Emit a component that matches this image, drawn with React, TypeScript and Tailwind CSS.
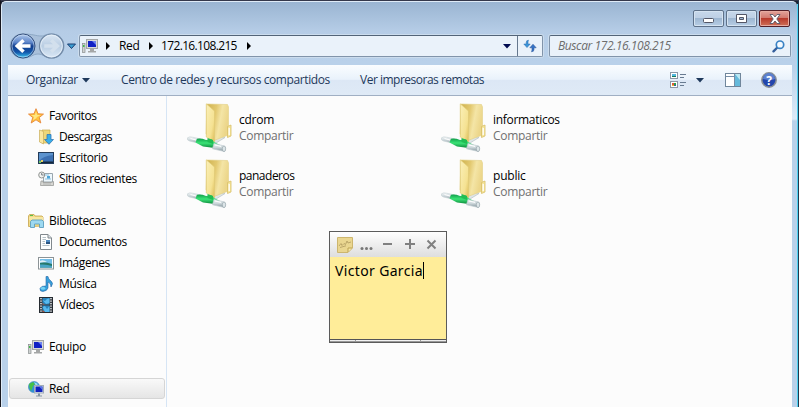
import React from "react";

function Caret({ className = "" }: { className?: string }) {
  return (
    <svg width="8" height="5" viewBox="0 0 8 5" className={className}>
      <path d="M0 0H8L4 4.6Z" fill="currentColor" />
    </svg>
  );
}

function Chevron() {
  return (
    <svg width="4" height="8" viewBox="0 0 4 8" className="shrink-0">
      <path d="M0 0L4 4L0 8Z" fill="#000" />
    </svg>
  );
}

function NavButtons() {
  return (
    <svg width="70" height="28" viewBox="0 0 70 28" className="shrink-0">
      <defs>
        <linearGradient id="back" x1="0" y1="0" x2="0" y2="1">
          <stop offset="0" stopColor="#b3cbed" />
          <stop offset="0.35" stopColor="#5d85c9" />
          <stop offset="0.5" stopColor="#133f8e" />
          <stop offset="0.75" stopColor="#1254a8" />
          <stop offset="1" stopColor="#39c8f5" />
        </linearGradient>
        <linearGradient id="fwd" x1="0" y1="0" x2="0" y2="1">
          <stop offset="0" stopColor="#dbe7f4" />
          <stop offset="0.5" stopColor="#b9cde2" />
          <stop offset="1" stopColor="#dbe9f6" />
        </linearGradient>
      </defs>
      <path d="M15 2C25 2 28 4 33 4C38 4 36 2 44 2C60 2 60 26 44 26C36 26 36 22 30 22C24 22 24 26 15 26C-2 26-2 2 15 2Z" fill="#a9c0da" stroke="#8da8c5" strokeWidth="1" />
      <circle cx="15" cy="14" r="12" fill="url(#back)" stroke="#354f7c" strokeWidth="1" />
      <circle cx="15" cy="14" r="11" fill="none" stroke="#d2e5f8" strokeOpacity=".55" />
      <path d="M15.5 8.2L9.3 14L15.5 19.8M9.8 14H22.5" fill="none" stroke="#fff" strokeWidth="3.6" />
      <circle cx="43.5" cy="14" r="12" fill="url(#fwd)" stroke="#7189a6" strokeWidth="1.2" />
      <circle cx="43.5" cy="14" r="10.8" fill="none" stroke="#e8f1fa" strokeOpacity=".8" />
      <path d="M43.2 8.2L49.4 14L43.2 19.8M49 14H36.2" fill="none" stroke="#d3e0ed" strokeWidth="3.6" />
      <path d="M59.5 12H67.5L63.5 16.5Z" fill="#3b9ed2" stroke="#1b3d70" strokeWidth="1" />
    </svg>
  );
}

function ComputerIcon() {
  return (
    <svg width="16" height="16" viewBox="0 0 16 16" className="shrink-0">
      <rect x="0.5" y="5.5" width="2.5" height="9" fill="#ced2d1" stroke="#888d8e" strokeWidth=".7" />
      <path d="M1 7H2.5V9H1Z" fill="#42ba4a" />
      <rect x="4.5" y="1.5" width="11" height="9" fill="#d7d9d8" stroke="#a3a6a7" />
      <rect x="6" y="3" width="8" height="6" fill="#1020c4" />
      <path d="M10 3H14V7Z" fill="#6e83ef" />
      <path d="M8 11H12V13H14V14.5H6V13H8Z" fill="#a5a7a7" />
    </svg>
  );
}

function NetworkIcon() {
  return (
    <svg width="16" height="16" viewBox="0 0 16 16" className="shrink-0">
      <circle cx="6" cy="6" r="5.6" fill="#3093d6" stroke="#4a91bf" strokeWidth=".6" />
      <path d="M1 3L5 1L7 3L5 5L4 8L3 10L1.5 7Z" fill="#46c245" />
      <path d="M6 1L10 3L8 5Z" fill="#9ee0f2" />
      <rect x="6.5" y="4.5" width="9" height="7.5" fill="#dbe3ec" stroke="#a0abb6" />
      <rect x="7.5" y="5.5" width="7" height="5.5" fill="#1122bd" />
      <path d="M11 5.5H14.5V9Z" fill="#5a76e5" />
      <path d="M10 12.5H12V14.5H14V15.5H8V14.5H10Z" fill="#8696a5" />
    </svg>
  );
}

function StarIcon() {
  return (
    <svg width="16" height="16" viewBox="0 0 16 16" className="shrink-0">
      <path d="M8 .7L10 5.8L15.5 6.1L11.3 9.5L12.8 15L8 11.8L3.2 15L4.7 9.5L.5 6.1L6 5.8Z" fill="#ffc33a" stroke="#e7863a" strokeWidth=".9" />
      <path d="M8 3L9 7L13 7L9 9L8 10.5L5 12L6 9L3 7L7 7Z" fill="#ffe783" />
    </svg>
  );
}

function DownloadsIcon() {
  return (
    <svg width="16" height="16" viewBox="0 0 16 16" className="shrink-0">
      <path d="M4 1H12V14H4Z" fill="#eed779" stroke="#c7a94b" strokeWidth=".7" />
      <path d="M1.5 1L5.5 2.5V15L1.5 13Z" fill="#fae7a0" stroke="#c9ad5b" strokeWidth=".7" />
      <path d="M9 5.5H13V10.5H15.5L11 15.3L6.5 10.5H9Z" fill="#38aee9" stroke="#3577b2" strokeWidth=".8" />
    </svg>
  );
}

function DesktopIcon() {
  return (
    <svg width="16" height="16" viewBox="0 0 16 16" className="shrink-0">
      <rect x=".5" y="2.5" width="15" height="11" fill="#3c70b2" stroke="#233c5a" />
      <path d="M1 3H15V5Q5 6 1 11Z" fill="#5c93ce" />
      <path d="M1 11.5H15V13H1Z" fill="#14283d" />
      <path d="M1 11H3V13H1Z" fill="#75cb61" />
      <path d="M3 10H5V12H3Z" fill="#e7cc68" />
    </svg>
  );
}

function RecentIcon() {
  return (
    <svg width="16" height="16" viewBox="0 0 16 16" className="shrink-0">
      <path d="M5.5 2.5H14.5V11H5.5Z" fill="#eef7fc" stroke="#9aa6ae" />
      <path d="M7 4H11M7 8H13" stroke="#8cc2df" />
      <path d="M9 5H12V7.5H9Z" fill="#4da5d8" />
      <path d="M3 10H5V11.5H13L15.5 10.5V14.5H2.5Z" fill="#d8d8d4" stroke="#9b9c99" strokeWidth=".8" />
      <path d="M5 13H13" stroke="#b0b3b2" />
      <circle cx="3.7" cy="4" r="3" fill="#f2f3f1" stroke="#909491" />
      <path d="M3.7 2V4H5.7" fill="none" stroke="#566169" strokeWidth=".8" />
    </svg>
  );
}

function LibraryIcon() {
  return (
    <svg width="16" height="16" viewBox="0 0 16 16" className="shrink-0">
      <path d="M.5 3V13.5H3L15 13V4L14 3H7L6 1.5H1.5Z" fill="#f2dc87" stroke="#c5a34b" strokeWidth=".8" />
      <path d="M1 4H15V7H1Z" fill="#f8e7a1" />
      <path d="M2 2.5H5" stroke="#59be49" />
      <path d="M4 7H14L15.5 8.5V14.5H11.5V11H6.5V14.5H2.5V8.5Z" fill="#9dd9f1" stroke="#5f9fbf" strokeWidth=".9" />
    </svg>
  );
}

function DocumentIcon() {
  return (
    <svg width="16" height="16" viewBox="0 0 16 16" className="shrink-0">
      <path d="M2.5 .5H10L13.5 4V15.5H2.5Z" fill="#fdfefe" stroke="#81888d" />
      <path d="M10 .5V4H13.5" fill="#dce3e8" stroke="#81888d" />
      <path d="M4.5 3.5H8M4.5 5.5H8M4.5 7.5H7M4.5 9.5H7M4.5 11.5H11.5" stroke="#a2b0b8" strokeWidth=".8" />
      <path d="M8 6H12V10H8Z" fill="#4f8ac1" />
      <path d="M8 8H12V10H8Z" fill="#285584" />
    </svg>
  );
}

function ImageIcon() {
  return (
    <svg width="16" height="16" viewBox="0 0 16 16" className="shrink-0">
      <rect x=".5" y="2.5" width="15" height="11.5" fill="#fff" stroke="#8c9396" />
      <rect x="2" y="4" width="12" height="8.5" fill="#72bde8" />
      <path d="M2 8Q6 6 14 9V12.5H2Z" fill="#27796b" />
      <path d="M2 9.5Q9 9 14 11V12.5H2Z" fill="#48a4c6" />
      <path d="M2 6Q5 4 9 7L2 7.5Z" fill="#e0f0f7" />
    </svg>
  );
}

function MusicIcon() {
  return (
    <svg width="16" height="16" viewBox="0 0 16 16" className="shrink-0">
      <path d="M8 .5H10Q10 3 13 5Q16 7 13 11Q13 7 10 6V12Q9 15 5 15.5Q1.5 15.5 2 12.5Q3 9.5 8 10Z" fill="#35a0dc" stroke="#2865a4" strokeWidth=".6" />
      <ellipse cx="5" cy="12.3" rx="2.2" ry="1.5" fill="#75d2f3" />
    </svg>
  );
}

function VideoIcon() {
  return (
    <svg width="16" height="16" viewBox="0 0 16 16" className="shrink-0">
      <rect x="1.5" y=".5" width="13" height="15" fill="#393d42" stroke="#262b31" />
      <rect x="4.5" y="1" width="7" height="6.5" fill="#2884bd" />
      <rect x="4.5" y="8.5" width="7" height="6.5" fill="#2884bd" />
      <path d="M4.5 3L7 4L9 2L11.5 1V6L8 7Z" fill="#57baf0" />
      <path d="M4.5 10L7 9L9 12L11.5 9V15H7Z" fill="#55b9ef" />
      <path d="M4.5 6L7 7.5H4.5ZM4.5 13L7 15H4.5Z" fill="#b4563b" />
      <path d="M3 1V15M13 1V15" stroke="#edf4f8" strokeWidth="1.4" strokeDasharray="1.3 1.2" />
    </svg>
  );
}

function SharedFolderIcon() {
  return (
    <svg width="48" height="50" viewBox="0 0 48 50" className="shrink-0">
      <defs>
        <linearGradient id="folderback" x1="0" y1="0" x2="1" y2=".3">
          <stop offset="0" stopColor="#cdb04c" />
          <stop offset=".45" stopColor="#e3c970" />
          <stop offset=".7" stopColor="#f4e5a6" />
          <stop offset="1" stopColor="#ecd68a" />
        </linearGradient>
        <linearGradient id="folderfront" x1="0" y1="0" x2="1" y2="1">
          <stop offset="0" stopColor="#fbf0b8" />
          <stop offset=".65" stopColor="#f5e293" />
          <stop offset="1" stopColor="#dcbc57" />
        </linearGradient>
        <linearGradient id="pipe" x1="0" y1="0" x2="0" y2="1">
          <stop offset="0" stopColor="#f2f6f7" />
          <stop offset=".5" stopColor="#cbd5d9" />
          <stop offset="1" stopColor="#81939a" />
        </linearGradient>
        <linearGradient id="cable" x1="0" y1="0" x2="0" y2="1">
          <stop offset="0" stopColor="#11a04b" />
          <stop offset=".45" stopColor="#3be477" />
          <stop offset="1" stopColor="#087d34" />
        </linearGradient>
      </defs>
      <path d="M27 38L35 33.5L39 34.5L30 40Z" fill="#dfe5e8" stroke="#b7c1c5" strokeWidth=".7" />
      <path d="M21 1L41.5 1.5L42.5 4V32L28 37.5L20 31Z" fill="url(#folderback)" stroke="#e3d084" strokeWidth=".6" />
      <path d="M20.3 .8L28.5 8V39L20.3 34Z" fill="url(#folderfront)" stroke="#e0ca77" strokeWidth=".7" />
      <path d="M41.5 23.5L45 22V33L41.5 34.5Z" fill="#f6e69d" stroke="#d8bf67" strokeWidth=".8" />
      <path d="M43.2 25V32" stroke="#fff" strokeWidth="1.3" />
      <path d="M1.5 34.8Q3.5 33.3 6.5 34.2L15 36L14 40.5L3.5 38Q.5 37 1.5 34.8Z" fill="url(#pipe)" stroke="#cbd5d9" strokeWidth=".7" />
      <path d="M11 35.8Q15 35 20 37L26 36.5L28 39L34 42L32 45.5L23 44.2L17 43.5L9.5 39.5Z" fill="url(#cable)" />
      <path d="M21.5 35L27 37V41L21.5 39Z" fill="#21bd54" />
      <path d="M28 40.5L38.5 43Q40.5 45 38.5 48.5L26.5 45.8Z" fill="url(#pipe)" stroke="#c3ced2" strokeWidth=".7" />
      <ellipse cx="38" cy="45.8" rx="1.7" ry="2.8" fill="#dce5e8" stroke="#94a1a7" strokeWidth=".6" />
      <path d="M4.5 35.5L10 37M29 42L35 43.4" stroke="#fff" strokeWidth="1" />
    </svg>
  );
}

type ShareProps = { name: string; tracking: string };
function Share({ name, tracking }: ShareProps) {
  return (
    <div className="flex h-14 w-[254px] items-start">
      <SharedFolderIcon />
      <div className="ml-[5px] pt-[9px] text-[12px] leading-4 text-black">
        <div><span className={tracking}>{name}</span></div>
        <div><span className="tracking-[-0.3px] text-[#707070]">Compartir</span></div>
      </div>
    </div>
  );
}

type TreeProps = { icon: React.ReactNode; text: string; tracking: string; child?: boolean; selected?: boolean };
function TreeRow({ icon, text, tracking, child, selected }: TreeProps) {
  return (
    <div className={`ml-px flex h-[21px] w-[156px] items-center rounded-[3px] border text-[12px] text-black ${child ? "pl-[28px]" : "pl-[18px]"} ${selected ? "border-[#d5d5d5] bg-linear-to-b from-[#f9f9f9] to-[#e5e5e5]" : "border-transparent"}`}>
      {icon}
      <span className={`ml-[5px] whitespace-nowrap ${tracking}`}>{text}</span>
    </div>
  );
}

function WindowButtons() {
  return (
    <div className="flex gap-[2px]">
      <div className="flex h-[17px] w-[31px] items-center justify-center rounded-[2px] border border-[#5e7189] bg-[linear-gradient(#c7d8eb_0%,#bdcfe4_48%,#9eb7d2_50%,#b7cee5_100%)] shadow-[inset_0_0_0_1px_#d5e3f1]">
        <svg width="11" height="5" viewBox="0 0 11 5" className="mt-1"><rect x=".5" y=".5" width="10" height="4" rx="1" fill="#fff" stroke="#535666" /></svg>
      </div>
      <div className="flex h-[17px] w-[31px] items-center justify-center rounded-[2px] border border-[#5e7189] bg-[linear-gradient(#c7d8eb_0%,#bdcfe4_48%,#9eb7d2_50%,#b7cee5_100%)] shadow-[inset_0_0_0_1px_#d5e3f1]">
        <svg width="11" height="9" viewBox="0 0 11 9"><path fillRule="evenodd" d="M.5.5H10.5V8.5H.5ZM3.5 3.5V5.5H7.5V3.5Z" fill="#fff" stroke="#535666" /></svg>
      </div>
      <div className="flex h-[17px] w-[31px] items-center justify-center rounded-[2px] border border-[#521e27] bg-[linear-gradient(#e2a39b_0%,#d2796e_46%,#b83a2c_50%,#cf7058_100%)] shadow-[inset_0_0_0_1px_#e6aaa0]">
        <svg width="12" height="10" viewBox="0 0 12 10"><path d="M1 .5H4L6 3L8 .5H11L7.8 5L11 9.5H8L6 7L4 9.5H1L4.2 5Z" fill="#fff" stroke="#58596a" strokeWidth=".9" /></svg>
      </div>
    </div>
  );
}

function StickyNote() {
  return (
    <div className="absolute left-[328px] top-[230px] flex h-[112px] w-[118px] flex-col border border-[#5b5b5b] bg-[#ffed99]">
      <div className="flex h-[25px] shrink-0 items-center bg-linear-to-b from-[#fefefe] to-[#dedede] text-[#808080]">
        <svg width="16" height="16" viewBox="0 0 16 16" className="ml-[7px] shrink-0">
          <path d="M.5.5H15.5V11L11 15.5H.5Z" fill="#ead690" stroke="#cdb66e" />
          <path d="M11 15V11H15" fill="#f7e7a6" stroke="#bca252" />
          <path d="M2 9L4 6.5L5 8.5L7 6.5L8.5 7.5L10 4L11 6L14 5M3 10.5L9 8.8" fill="none" stroke="#b09b60" strokeWidth=".8" />
        </svg>
        <svg width="92" height="24" viewBox="0 0 92 24" className="shrink-0">
          <g fill="#777"><circle cx="9" cy="15.5" r="1.5" /><circle cx="13.5" cy="15.5" r="1.5" /><circle cx="18" cy="15.5" r="1.5" /></g>
          <path d="M30 11H39M52 11H62M57 6V16" stroke="#808080" strokeWidth="2" />
          <path d="M74.5 7.5L82.5 15.5M82.5 7.5L74.5 15.5" stroke="#808080" strokeWidth="2" />
        </svg>
      </div>
      <div className="flex flex-1 items-start pl-[5px] pt-[5px]">
        <span className="whitespace-nowrap font-['Noto_Sans','Open_Sans',sans-serif] text-[14px] leading-[18px] tracking-[0.35px] text-black">Victor Garcia</span>
        <i className="h-[17px] w-px bg-black" />
      </div>
      <div className="flex h-[3px] gap-px border-t border-[#555] bg-[#999]">
        <i className="h-px w-[25px] bg-[#eee]" /><i className="h-px flex-1 bg-[#f3f3f3]" /><i className="h-px w-[25px] bg-[#eee]" />
      </div>
    </div>
  );
}

export default function App() {
  return (
    <div className="relative flex h-[407px] w-[799px] overflow-hidden border-l border-t border-l-[#17171f] border-t-[#34384b] bg-[#1b2335] font-['Open_Sans','Noto_Sans',sans-serif] text-[12px]">
      <div className="flex w-[796px] shrink-0 flex-col rounded-tl-[5px] rounded-tr-[5px] border-l border-t border-[#dfebf7] bg-[linear-gradient(#9ab5d2_0px,#b5cce6_29px,#b9d1ea_60px)] pl-[6px]">
        <div className="flex h-[26px] shrink-0 justify-end pr-[7px] pt-[8px]"><WindowButtons /></div>
        <div className="flex h-[37px] shrink-0 items-start pt-[4px]">
          <NavButtons />
          <div className="ml-px mt-[3px] flex h-[22px] w-[464px] items-center rounded-[2px] border border-[#8194aa] border-t-[#526478] bg-[#eaf2fa] pl-[2px] shadow-[0_0_0_1px_#cbdced]">
            <ComputerIcon />
            <span className="ml-[8px] flex"><Chevron /></span>
            <span className="ml-[9px] w-[30px] tracking-[-0.3px]">Red</span>
            <Chevron />
            <span className="ml-[8px] w-[84px] tracking-[-0.65px]">172.16.108.215</span>
            <span className="ml-[2px] flex"><Chevron /></span>
            <Caret className="ml-auto mr-[6px] text-[#000b50]" />
            <span className="flex h-full w-[25px] items-center justify-center border-l border-[#65788e]">
              <svg width="16" height="14" viewBox="0 0 16 14">
                <path d="M6.5 1.2Q4.2 1.2 4.2 3.5V5H1.8L5 8.6L8.2 5H6Q5.8 2.5 6.5 1.2Z" fill="#3a94d7" stroke="#2869ae" strokeWidth=".5" />
                <path d="M9.5 12.8Q12 12.8 12 10.5V8.8H14.2L11 5.2L7.8 8.8H10Q10.2 11.5 9.5 12.8Z" fill="#3673c5" stroke="#285296" strokeWidth=".5" />
              </svg>
            </span>
          </div>
          <div className="ml-[6px] mt-[3px] flex h-[22px] w-[242px] items-center rounded-[2px] border border-[#8194aa] border-t-[#526478] bg-[#eaf2fa] pl-[8px] pr-[5px] italic text-[#6d6d6d] shadow-[0_0_0_1px_#cbdced]">
            <span className="whitespace-nowrap tracking-[-0.4px]">Buscar 172.16.108.215</span>
            <svg width="13" height="13" viewBox="0 0 13 13" className="ml-auto">
              <path d="M5.3 7.5L1.5 11.3" stroke="#355f9c" strokeWidth="2.4" strokeLinecap="round" />
              <circle cx="8" cy="4.7" r="3.7" fill="#f4faff" stroke="#3982c4" strokeWidth="1.7" />
            </svg>
          </div>
        </div>
        <div className="flex min-h-0 flex-1">
          <div className="flex w-[784px] shrink-0 flex-col bg-[#fcfcfc]">
            <div className="flex h-[31px] shrink-0 items-center border-b border-[#a0afc3] bg-[linear-gradient(#fafdff_0%,#e9f2fb_48%,#dce7f5_50%,#dfeaf6_100%)] pl-[18px] text-[#1e395b]">
              <span className="w-[56px] whitespace-nowrap tracking-[-0.35px]">Organizar</span>
              <Caret />
              <span className="ml-[31px] w-[239px] whitespace-nowrap tracking-[-0.4px]">Centro de redes y recursos compartidos</span>
              <span className="whitespace-nowrap tracking-[-0.5px]">Ver impresoras remotas</span>
              <div className="ml-auto flex items-center pr-[15px]">
                <svg width="17" height="16" viewBox="0 0 17 16">
                  <g stroke="#8b97a5" fill="#fff"><rect x=".5" y=".5" width="7" height="6" /><rect x=".5" y="9.5" width="7" height="6" /></g>
                  <path d="M2 2H6V4H2Z" fill="#52b7df" /><path d="M2 4H6V5H2Z" fill="#177a57" />
                  <path d="M2 11H4V13H2Z" fill="#dd563f" /><path d="M4 11H6V13H4Z" fill="#2aa24a" /><path d="M2 13H4V14H2Z" fill="#e8b52c" /><path d="M4 13H6V14H4Z" fill="#315bb0" />
                  <path d="M10 2.5H16M10 5.5H14M10 10.5H16M10 13.5H14" stroke="#687b91" />
                </svg>
                <Caret className="ml-[9px]" />
                <svg width="16" height="14" viewBox="0 0 16 14" className="ml-[21px]">
                  <rect x=".5" y=".5" width="15" height="13" fill="#fff" stroke="#70869b" />
                  <path d="M1 3.5H10M9.5 1V13" stroke="#778ea6" /><path d="M10 1H15V13H10Z" fill="#66badb" />
                  <path d="M10 1H15V7Z" fill="#bce9f4" />
                </svg>
                <svg width="16" height="16" viewBox="0 0 16 16" className="ml-[20px]">
                  <circle cx="8" cy="8" r="7.2" fill="#2346ac" stroke="#8b9094" strokeWidth="1.5" />
                  <path d="M2 7A6 6 0 0 1 14 7Q10 9 2 7Z" fill="#5b80cf" />
                  <text x="8" y="12.5" textAnchor="middle" className="font-['Open_Sans'] text-[12px] font-bold" fill="#fff">?</text>
                </svg>
              </div>
            </div>
            <div className="flex min-h-0 flex-1">
              <nav className="w-[159px] shrink-0 border-r border-[#d6e5f5] pt-[9px]">
                <TreeRow icon={<StarIcon />} text="Favoritos" tracking="tracking-[-0.4px]" />
                <TreeRow child icon={<DownloadsIcon />} text="Descargas" tracking="tracking-[-0.48px]" />
                <TreeRow child icon={<DesktopIcon />} text="Escritorio" tracking="tracking-[-0.42px]" />
                <TreeRow child icon={<RecentIcon />} text="Sitios recientes" tracking="tracking-[-0.4px]" />
                <div className="h-[21px]" />
                <TreeRow icon={<LibraryIcon />} text="Bibliotecas" tracking="tracking-[-0.32px]" />
                <TreeRow child icon={<DocumentIcon />} text="Documentos" tracking="tracking-[-0.36px]" />
                <TreeRow child icon={<ImageIcon />} text="Imágenes" tracking="tracking-[-0.42px]" />
                <TreeRow child icon={<MusicIcon />} text="Música" tracking="tracking-[-0.3px]" />
                <TreeRow child icon={<VideoIcon />} text="Vídeos" tracking="tracking-[-0.36px]" />
                <div className="h-[21px]" />
                <TreeRow icon={<ComputerIcon />} text="Equipo" tracking="tracking-[-0.36px]" />
                <div className="h-[21px]" />
                <TreeRow selected icon={<NetworkIcon />} text="Red" tracking="tracking-[-0.3px]" />
              </nav>
              <main className="flex flex-1 flex-wrap content-start pl-[19px] pt-[7px]">
                <Share name="cdrom" tracking="tracking-[-0.25px]" />
                <Share name="informaticos" tracking="tracking-[-0.3px]" />
                <Share name="panaderos" tracking="tracking-[-0.5px]" />
                <Share name="public" tracking="tracking-[-0.2px]" />
              </main>
            </div>
          </div>
          <div className="flex-1 bg-[linear-gradient(#b9d1ea_0px,#dceaf8_54px,#b9d1ea_56px)]" />
        </div>
      </div>
      <div className="mt-[3px] w-px shrink-0 bg-[#4dd2f2]" />
      <div className="w-px shrink-0 bg-[#203850]" />
      <StickyNote />
    </div>
  );
}
